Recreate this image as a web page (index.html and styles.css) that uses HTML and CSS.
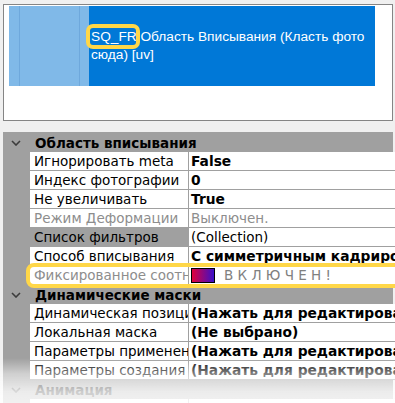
FILE: index.html
```html
<!DOCTYPE html>
<html lang="ru">
<head>
  <meta charset="UTF-8">
  <title>Область вписывания</title>
  <link rel="stylesheet" href="styles.css">
</head>
<body>
  <div class="preview">
    <div class="thumb">
      <div class="thumb-side"><div class="thumb-frame"></div></div>
      <div class="thumb-title">
        <div class="thumb-text"><span class="mark">SQ_FR</span> Область Вписывания (Класть фото<br>сюда) [uv]</div>
      </div>
    </div>
  </div>

  <div class="grid">
    <div class="grid-main">
      <div class="cat">
        <span class="chev"><svg width="10" height="6" viewBox="0 0 10 6"><polyline points="1,1 5,5 9,1" fill="none" stroke="#3c3c3c" stroke-width="1.6"/></svg></span>
        <span class="cat-name">Область вписывания</span>
      </div>
      <div class="row"><div class="name">Игнорировать meta</div><div class="val bold">False</div></div>
      <div class="row"><div class="name">Индекс фотографии</div><div class="val bold">0</div></div>
      <div class="row"><div class="name">Не увеличивать</div><div class="val bold">True</div></div>
      <div class="row off"><div class="name">Режим Деформации</div><div class="val">Выключен.</div></div>
      <div class="row picked"><div class="name">Список фильтров</div><div class="val">(Collection)</div></div>
      <div class="row"><div class="name">Способ вписывания</div><div class="val bold">С симметричным кадрированием</div></div>
      <div class="row off marked"><div class="name">Фиксированное соотношение</div><div class="val"><span class="swatch"></span><span class="spaced">В К Л Ю Ч Е Н !</span></div></div>

      <div class="cat">
        <span class="chev"><svg width="10" height="6" viewBox="0 0 10 6"><polyline points="1,1 5,5 9,1" fill="none" stroke="#3c3c3c" stroke-width="1.6"/></svg></span>
        <span class="cat-name">Динамические маски</span>
      </div>
      <div class="row"><div class="name">Динамическая позиция</div><div class="val bold">(Нажать для редактирования)</div></div>
      <div class="row"><div class="name">Локальная маска</div><div class="val bold">(Не выбрано)</div></div>
      <div class="row"><div class="name">Параметры применения</div><div class="val bold">(Нажать для редактирования)</div></div>
      <div class="row"><div class="name">Параметры создания маски</div><div class="val bold">(Нажать для редактирования)</div></div>

      <div class="cat">
        <span class="chev"><svg width="10" height="6" viewBox="0 0 10 6"><polyline points="1,1 5,5 9,1" fill="none" stroke="#3c3c3c" stroke-width="1.6"/></svg></span>
        <span class="cat-name">Анимация</span>
      </div>
      <div class="row"><div class="name">Длительность</div><div class="val bold">0</div></div>
    </div>
    <div class="scroll">
      <div class="scroll-up"><svg width="11" height="7" viewBox="0 0 11 7"><polyline points="1,6 5.5,1.5 10,6" fill="none" stroke="#606060" stroke-width="1.8"/></svg></div>
      <div class="scroll-thumb"></div>
    </div>
  </div>

  <div class="fade"></div>
</body>
</html>
```

FILE: styles.css
```css
html, body {
  margin: 0;
  height: 100%;
  overflow: hidden;
}
body {
  background-color: #f0f0f0;
  font-family: "DejaVu Sans", Verdana, sans-serif;
  font-size: 13.5px;
  color: #000;
  padding: 4px 3px 0 3px;
  box-sizing: border-box;
}
.preview {
  width: 390px;
  height: 117px;
  box-sizing: border-box;
  background-color: #fff;
  border: 1px solid #858585;
  padding: 1px 0 0 5px;
}
.thumb {
  display: flex;
  width: 366px;
  height: 80px;
}
.thumb-side {
  width: 80px;
  background-color: #80b9e8;
  padding: 0 9px 0 10px;
  box-sizing: border-box;
}
.thumb-frame {
  height: 100%;
  border-left: 1px solid #6ea8dc;
  border-right: 1px solid #6ea8dc;
}
.thumb-title {
  flex: 1;
  background-color: #0078d7;
  color: #fff;
  display: flex;
  align-items: center;
  padding-left: 2px;
  font-family: "Liberation Sans", Arial, sans-serif;
  font-size: 13.7px;
  line-height: 18px;
}
.mark {
  position: relative;
}
.mark::after {
  content: "";
  position: absolute;
  left: -5px;
  right: -3px;
  top: -5px;
  bottom: -5px;
  border: 4px solid #ffd748;
  border-radius: 7px;
}

/* property grid */
.grid {
  margin-top: 11px;
  width: 390px;
  height: 300px;
  box-sizing: border-box;
  border: 1px solid #a0a0a0;
  background-color: #a0a0a0;
  display: flex;
}
.grid-main {
  flex: 1;
}
.cat {
  height: 19px;
  display: flex;
  align-items: center;
  font-weight: bold;
}
.chev {
  width: 26px;
  display: flex;
  justify-content: center;
  padding-right: 2px;
  box-sizing: border-box;
}
.cat-name {
  padding-left: 5px;
}
.row {
  display: flex;
  height: 19px;
  padding-left: 26px;
  position: relative;
}
.name, .val {
  background-color: #fff;
  border-bottom: 1px solid #a0a0a0;
  white-space: nowrap;
  overflow: hidden;
  line-height: 18px;
}
.name {
  width: 159px;
  flex: none;
  box-sizing: border-box;
  border-right: 1px solid #a0a0a0;
  padding-left: 4px;
}
.val {
  flex: 1;
  padding-left: 2px;
  display: flex;
  align-items: center;
}
.bold {
  font-weight: bold;
  font-size: 13.8px;
}
.off .name, .off .val {
  color: #8d8d8d;
}
.picked .name {
  background-color: #a0a0a0;
}
.marked::after {
  content: "";
  position: absolute;
  left: 22px;
  right: -5px;
  top: -3px;
  bottom: -3px;
  border: 4px solid #ffd748;
  border-radius: 8px;
}
.swatch {
  width: 22px;
  height: 13px;
  border: 1px solid #000;
  background: linear-gradient(to right, #e0003c, #3a10c8);
  margin-right: 9px;
  flex: none;
}
.spaced {
  color: #808080;
}
.scroll {
  width: 20px;
  background-color: #f0f0f0;
  border-left: 1px solid #a0a0a0;
  display: flex;
  flex-direction: column;
}
.scroll-up {
  height: 20px;
  display: flex;
  align-items: center;
  justify-content: center;
}
.scroll-thumb {
  flex: 1;
  margin: 0 1px 0 0;
  background-color: #cdcdcd;
}
.fade {
  position: fixed;
  left: 0;
  right: 0;
  bottom: 0;
  height: 45px;
  background: linear-gradient(to bottom, rgba(255,255,255,0), rgba(255,255,255,0.5) 35%, rgba(255,255,255,0.8) 75%, rgba(255,255,255,0.85));
}
```
